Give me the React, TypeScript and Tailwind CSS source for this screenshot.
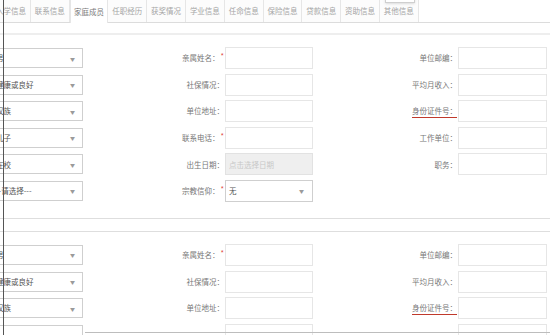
import React from 'react';

const tabs = ['入学信息', '联系信息', '家庭成员', '任职经历', '获奖情况', '学业信息', '任命信息', '保险信息', '贷款信息', '资助信息', '其他信息'];

type Field = { label: string; required?: boolean; kind?: 'input' | 'date' | 'select'; value?: string; mark?: boolean };

interface Row {
  left: string;
  mid: Field;
  right?: Field;
}

const rowsA: Row[] = [
  { left: '男', mid: { label: '亲属姓名：', required: true }, right: { label: '单位邮编：' } },
  { left: '健康或良好', mid: { label: '社保情况：' }, right: { label: '平均月收入：' } },
  { left: '汉族', mid: { label: '单位地址：' }, right: { label: '身份证件号：', mark: true } },
  { left: '儿子', mid: { label: '联系电话：', required: true }, right: { label: '工作单位：' } },
  { left: '在校', mid: { label: '出生日期：', kind: 'date' }, right: { label: '职务：' } },
  { left: '--请选择---', mid: { label: '宗教信仰：', required: true, kind: 'select', value: '无' } },
];

const rowsB: Row[] = [
  { left: '男', mid: { label: '亲属姓名：', required: true }, right: { label: '单位邮编：' } },
  { left: '健康或良好', mid: { label: '社保情况：' }, right: { label: '平均月收入：' } },
  { left: '汉族', mid: { label: '单位地址：' }, right: { label: '身份证件号：', mark: true } },
  { left: '', mid: { label: '' }, right: { label: '' } },
];

const Arrow = () => <span className="text-[5px] text-[#9a9a9a] leading-none">▼</span>;

const Control = ({ f }: { f: Field }) => {
  if (f.kind === 'date') {
    return (
      <div className="h-full border border-[#e2e2e2] bg-[#efefef] flex items-center px-[3px] text-[#c8c8c8]">
        点击选择日期
      </div>
    );
  }
  if (f.kind === 'select') {
    return (
      <div className="h-full border border-[#cfcfcf] bg-white flex items-center justify-between px-[3px] pr-[8px] text-[#555]">
        <span>{f.value}</span>
        <Arrow />
      </div>
    );
  }
  return <div className="h-full border border-[#e6e6e6] bg-white" />;
};

const Label = ({ f, w }: { f: Field; w: string }) => (
  <div className={`${w} shrink-0 flex items-center justify-end pr-[1px] text-[#777]`}>
    <span className={f.mark ? 'underline decoration-[#c0392b] decoration-[1px] underline-offset-[3px]' : ''}>{f.label}</span>
    {f.required && <span className="text-[#e0463c] self-start mt-[5px] ml-[1px]">*</span>}
  </div>
);

const FormRows = ({ rows }: { rows: Row[] }) => (
  <div className="flex flex-col gap-[4.6px]">
    {rows.map((r, i) => (
      <div key={i} className="flex h-[22px]">
        <div className="w-[95px] -ml-[12px] shrink-0 py-[1px]">
          <div className="h-full border border-[#cfcfcf] bg-white flex items-center justify-between pl-[7px] pr-[7px] text-[#555]">
            <span>{r.left}</span>
            {r.left ? <Arrow /> : null}
          </div>
        </div>
        <Label f={r.mid} w="w-[142px]" />
        <div className="w-[88px] shrink-0">
          <Control f={r.mid} />
        </div>
        {r.right ? (
          <>
            <Label f={r.right} w="w-[145px]" />
            <div className="w-[89px] shrink-0">
              <Control f={r.right} />
            </div>
          </>
        ) : null}
      </div>
    ))}
  </div>
);

export default function App() {
  return (
    <div
      className="relative w-[550px] h-[335px] overflow-hidden bg-white text-[7.5px] leading-none"
      style={{ fontFamily: '"Noto Sans CJK SC", "Noto Sans", sans-serif' }}
    >
      {/* tabs */}
      <div className="flex h-[23px] -ml-[8px] border-b border-[#dcdcdc] text-[#a5a5a5]">
        {tabs.map((t, i) => (
          <div
            key={t}
            className={`w-[38.8px] shrink-0 flex items-center justify-center border-r border-[#e6e6e6] ${
              i === 2 ? 'bg-white text-[#777] -mb-[1px] border-l border-[#dcdcdc]' : 'bg-[#fcfcfc]'
            }`}
          >
            {t}
          </div>
        ))}
        <div className="flex-1 bg-white" />
      </div>
      <div className="absolute left-[385px] top-[-4px] w-[30px] h-[7px] border border-[#cfcfcf] bg-white shadow-sm" />

      <div className="h-[10px]" />
      <div className="h-[2px] bg-[#eeeeee]" />
      <div className="h-[12px]" />

      <FormRows rows={rowsA} />

      <div className="h-[16px]" />
      <div className="h-px bg-[#dedede]" />
      <div className="h-[12px]" />
      <div className="h-px bg-[#dedede]" />
      <div className="h-[12px]" />

      <FormRows rows={rowsB} />

      <div className="absolute left-[85px] right-0 top-[332px] h-px bg-[#bdbdbd]" />
      <div className="absolute left-[3px] top-0 bottom-0 w-px bg-[#555]" />
    </div>
  );
}
